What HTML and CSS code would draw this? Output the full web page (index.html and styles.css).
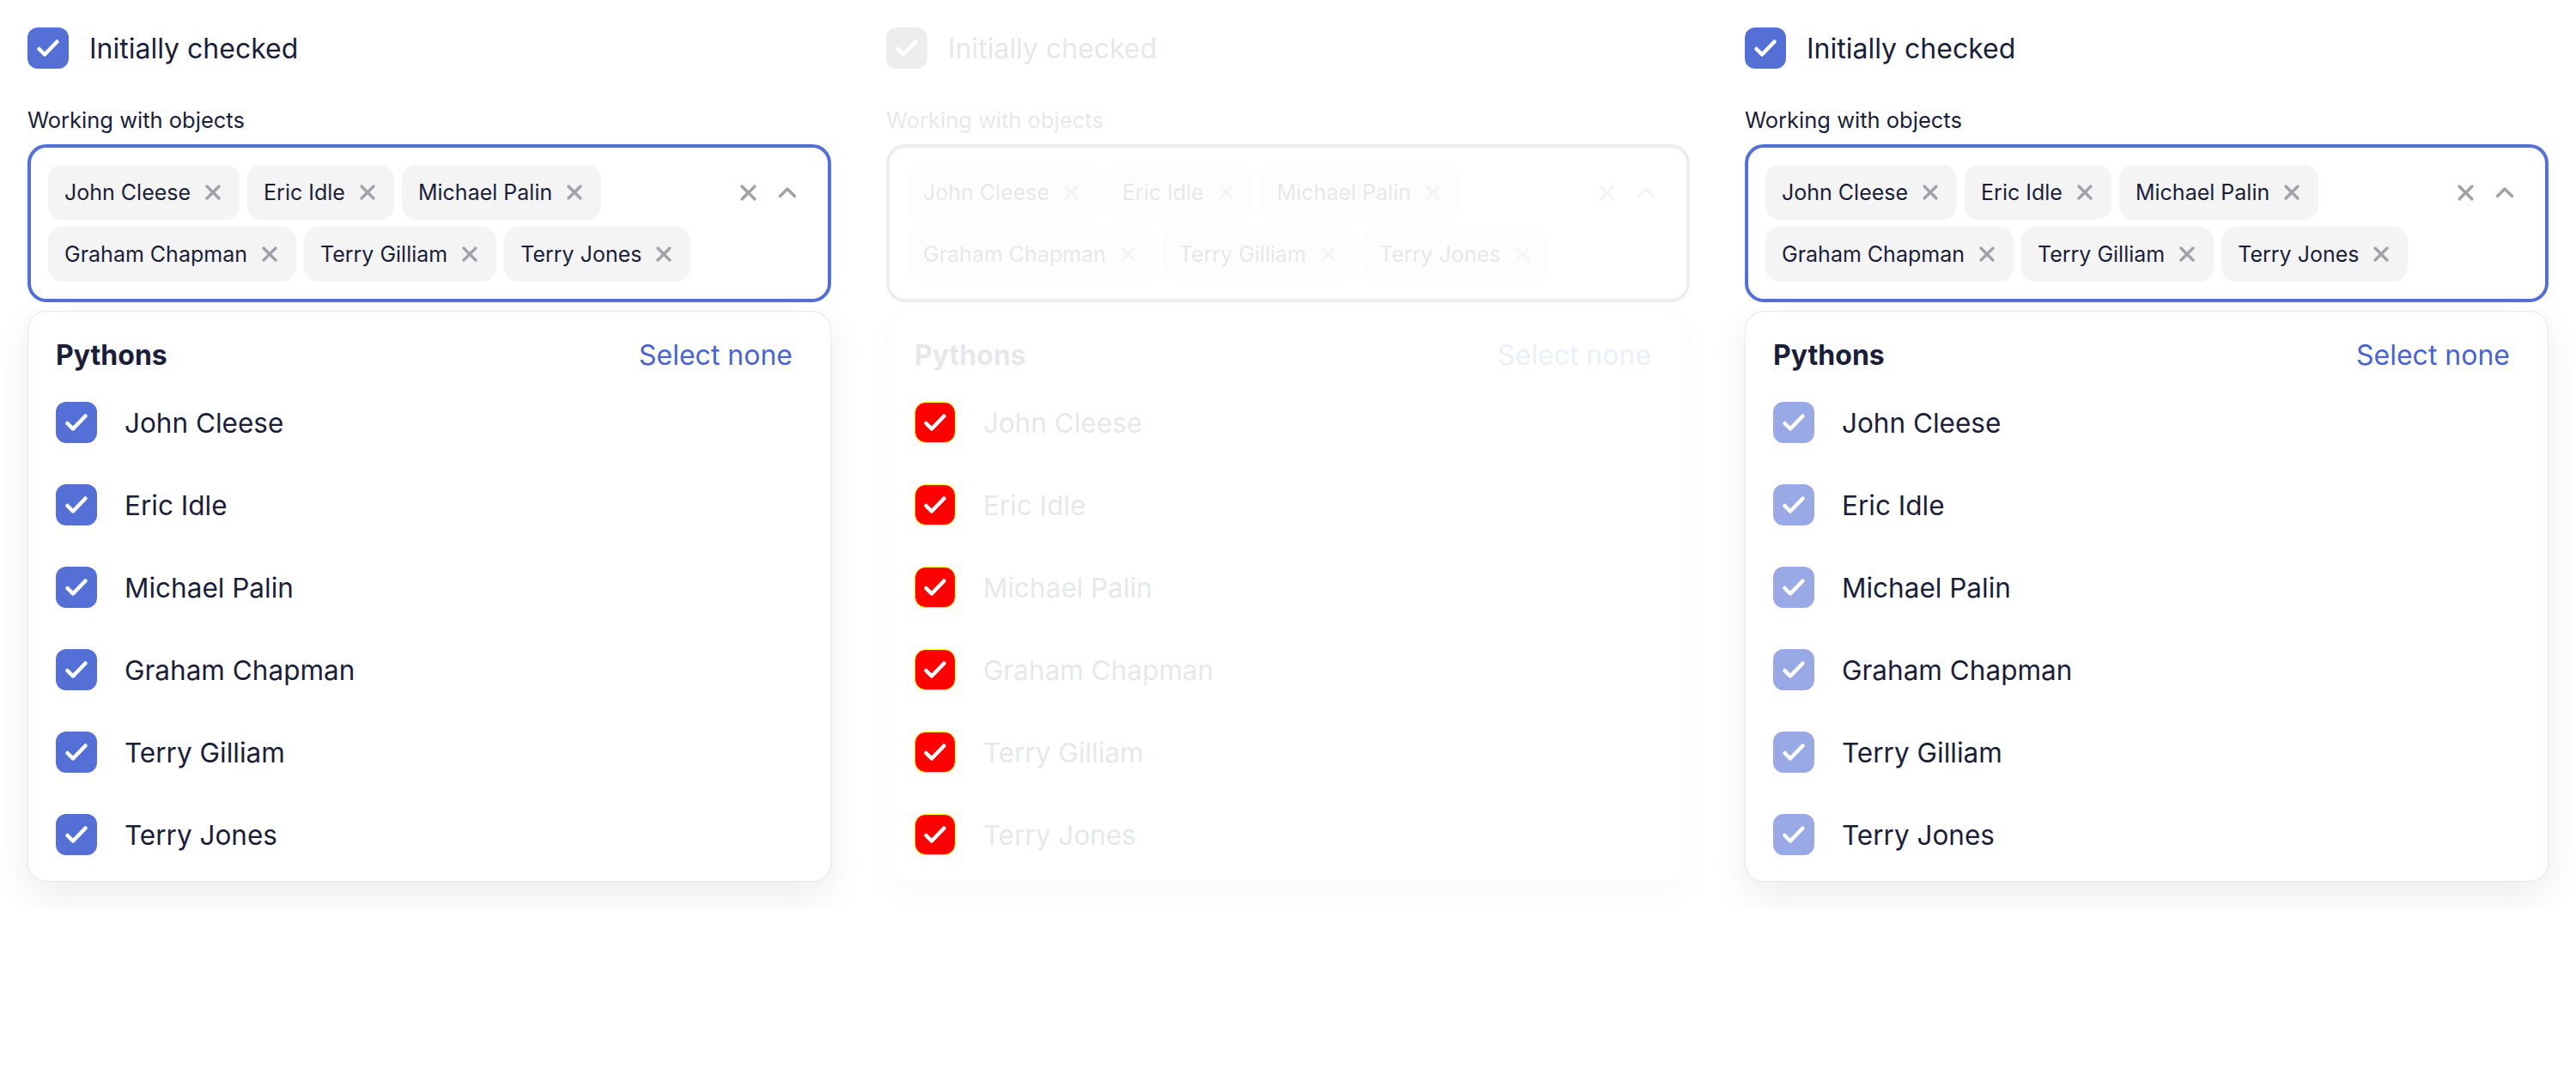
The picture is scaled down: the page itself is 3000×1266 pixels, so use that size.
FILE: index.html
```html
<!DOCTYPE html>
<html lang="en">
<head>
<meta charset="utf-8">
<title>Multiselect</title>
<link rel="stylesheet" href="styles.css">
</head>
<body>
<svg width="0" height="0" class="defs" aria-hidden="true">
  <defs>
    <symbol id="check" viewBox="0 0 48 48"><path d="M13.5 25l6.5 6.5 14.5-15" fill="none" stroke="currentColor" stroke-width="4.5" stroke-linecap="round" stroke-linejoin="round"/></symbol>
    <symbol id="x" viewBox="0 0 20 20"><path d="M3 3l14 14M17 3L3 17" fill="none" stroke="currentColor" stroke-width="3.4" stroke-linecap="round"/></symbol>
    <symbol id="chev" viewBox="0 0 22 14"><path d="M2.5 11.5L11 3l8.5 8.5" fill="none" stroke="currentColor" stroke-width="3.4" stroke-linecap="round" stroke-linejoin="round"/></symbol>
  </defs>
</svg>
<main class="grid">
  <!-- Column 1 -->
  <section class="col">
    <label class="toggle"><span class="box"><svg><use href="#check"/></svg></span><span>Initially checked</span></label>
    <div class="field-label">Working with objects</div>
    <div class="select">
      <div class="tags">
        <span class="tag">John Cleese<svg class="tx"><use href="#x"/></svg></span>
        <span class="tag">Eric Idle<svg class="tx"><use href="#x"/></svg></span>
        <span class="tag">Michael Palin<svg class="tx"><use href="#x"/></svg></span>
        <span class="tag">Graham Chapman<svg class="tx"><use href="#x"/></svg></span>
        <span class="tag">Terry Gilliam<svg class="tx"><use href="#x"/></svg></span>
        <span class="tag">Terry Jones<svg class="tx"><use href="#x"/></svg></span>
      </div>
      <div class="ctrls"><svg class="cx"><use href="#x"/></svg><svg class="cv"><use href="#chev"/></svg></div>
    </div>
    <div class="panel">
      <div class="phead"><span class="ptitle">Pythons</span><span class="pnone">Select none</span></div>
      <div class="item"><span class="box"><svg><use href="#check"/></svg></span><span class="itext">John Cleese</span></div>
      <div class="item"><span class="box"><svg><use href="#check"/></svg></span><span class="itext">Eric Idle</span></div>
      <div class="item"><span class="box"><svg><use href="#check"/></svg></span><span class="itext">Michael Palin</span></div>
      <div class="item"><span class="box"><svg><use href="#check"/></svg></span><span class="itext">Graham Chapman</span></div>
      <div class="item"><span class="box"><svg><use href="#check"/></svg></span><span class="itext">Terry Gilliam</span></div>
      <div class="item"><span class="box"><svg><use href="#check"/></svg></span><span class="itext">Terry Jones</span></div>
    </div>
  </section>

  <!-- Column 2 (disabled) -->
  <section class="col disabled">
    <label class="toggle"><span class="box"><svg><use href="#check"/></svg></span><span class="fade">Initially checked</span></label>
    <div class="field-label fade">Working with objects</div>
    <div class="select">
      <div class="tags fade">
        <span class="tag">John Cleese<svg class="tx"><use href="#x"/></svg></span>
        <span class="tag">Eric Idle<svg class="tx"><use href="#x"/></svg></span>
        <span class="tag">Michael Palin<svg class="tx"><use href="#x"/></svg></span>
        <span class="tag">Graham Chapman<svg class="tx"><use href="#x"/></svg></span>
        <span class="tag">Terry Gilliam<svg class="tx"><use href="#x"/></svg></span>
        <span class="tag">Terry Jones<svg class="tx"><use href="#x"/></svg></span>
      </div>
      <div class="ctrls fade"><svg class="cx"><use href="#x"/></svg><svg class="cv"><use href="#chev"/></svg></div>
    </div>
    <div class="panel">
      <div class="phead fade"><span class="ptitle">Pythons</span><span class="pnone">Select none</span></div>
      <div class="item"><span class="box red"><svg><use href="#check"/></svg></span><span class="itext fade">John Cleese</span></div>
      <div class="item"><span class="box red"><svg><use href="#check"/></svg></span><span class="itext fade">Eric Idle</span></div>
      <div class="item"><span class="box red"><svg><use href="#check"/></svg></span><span class="itext fade">Michael Palin</span></div>
      <div class="item"><span class="box red"><svg><use href="#check"/></svg></span><span class="itext fade">Graham Chapman</span></div>
      <div class="item"><span class="box red"><svg><use href="#check"/></svg></span><span class="itext fade">Terry Gilliam</span></div>
      <div class="item"><span class="box red"><svg><use href="#check"/></svg></span><span class="itext fade">Terry Jones</span></div>
    </div>
  </section>

  <!-- Column 3 -->
  <section class="col">
    <label class="toggle"><span class="box"><svg><use href="#check"/></svg></span><span>Initially checked</span></label>
    <div class="field-label">Working with objects</div>
    <div class="select">
      <div class="tags">
        <span class="tag">John Cleese<svg class="tx"><use href="#x"/></svg></span>
        <span class="tag">Eric Idle<svg class="tx"><use href="#x"/></svg></span>
        <span class="tag">Michael Palin<svg class="tx"><use href="#x"/></svg></span>
        <span class="tag">Graham Chapman<svg class="tx"><use href="#x"/></svg></span>
        <span class="tag">Terry Gilliam<svg class="tx"><use href="#x"/></svg></span>
        <span class="tag">Terry Jones<svg class="tx"><use href="#x"/></svg></span>
      </div>
      <div class="ctrls"><svg class="cx"><use href="#x"/></svg><svg class="cv"><use href="#chev"/></svg></div>
    </div>
    <div class="panel">
      <div class="phead"><span class="ptitle">Pythons</span><span class="pnone">Select none</span></div>
      <div class="item"><span class="box soft"><svg><use href="#check"/></svg></span><span class="itext">John Cleese</span></div>
      <div class="item"><span class="box soft"><svg><use href="#check"/></svg></span><span class="itext">Eric Idle</span></div>
      <div class="item"><span class="box soft"><svg><use href="#check"/></svg></span><span class="itext">Michael Palin</span></div>
      <div class="item"><span class="box soft"><svg><use href="#check"/></svg></span><span class="itext">Graham Chapman</span></div>
      <div class="item"><span class="box soft"><svg><use href="#check"/></svg></span><span class="itext">Terry Gilliam</span></div>
      <div class="item"><span class="box soft"><svg><use href="#check"/></svg></span><span class="itext">Terry Jones</span></div>
    </div>
  </section>
</main>
</body>
</html>
```

FILE: styles.css
```css
html, body {
  margin: 0;
  padding: 0;
  background: #ffffff;
}
body {
  font-family: Inter, "Noto Sans", "Liberation Sans", sans-serif;
  color: #1b1e3a;
}
.defs {
  position: absolute;
  width: 0;
  height: 0;
}
.grid {
  display: grid;
  grid-template-columns: repeat(3, 936px);
  column-gap: 64px;
  padding: 32px;
}
.col {
  display: flex;
  flex-direction: column;
}
.toggle {
  display: flex;
  align-items: center;
  gap: 24px;
  height: 48px;
  font-size: 32px;
}
.box {
  width: 48px;
  height: 48px;
  flex: none;
  border-radius: 12px;
  background: #5470d6;
  color: #ffffff;
  display: flex;
  box-sizing: border-box;
}
.box svg {
  width: 48px;
  height: 48px;
}
.box.soft {
  background: #98a9e6;
}
.box.red {
  background: #ff0000;
  border: 1px solid #ffff00;
  border-radius: 13px;
}
.box.red svg {
  margin: -1px;
}
.disabled .toggle .box {
  background: #ededed;
}
.fade {
  opacity: 0.1;
}
.field-label {
  font-size: 25.5px;
  line-height: 32px;
  margin-top: 44px;
  margin-bottom: 12px;
}
.select {
  border: 4px solid #5470d6;
  border-radius: 22px;
  padding: 20px 36px 20px 20px;
  display: flex;
  align-items: flex-start;
  gap: 24px;
  background: #fff;
}
.disabled .select {
  border-color: #eeeeee;
}
.tags {
  flex: 1;
  display: flex;
  flex-wrap: wrap;
  gap: 8px 9px;
}
.tag {
  height: 64px;
  display: inline-flex;
  align-items: center;
  gap: 16px;
  padding: 0 21px 0 19px;
  border-radius: 16px;
  background: #f4f4f5;
  font-size: 25px;
  color: #1b1e3a;
}
.tx {
  width: 20px;
  height: 20px;
  color: #a1a1aa;
}
.ctrls {
  display: flex;
  align-items: center;
  gap: 24px;
  height: 64px;
}
.cx {
  width: 21px;
  height: 21px;
  color: #a1a1aa;
}
.cv {
  width: 22px;
  height: 14px;
  color: #a1a1aa;
}
.panel {
  margin-top: 10px;
  border: 1px solid #e6e6e9;
  border-radius: 22px;
  padding: 18px 32px 5px 32px;
  box-shadow: 0 16px 40px rgba(20, 20, 40, 0.08);
  background: #fff;
}
.disabled .panel {
  border-color: #fafafa;
  box-shadow: 0 16px 40px rgba(20, 20, 40, 0.025);
}
.phead {
  display: flex;
  justify-content: space-between;
  align-items: center;
  height: 64px;
}
.ptitle {
  font-size: 32px;
  font-weight: 700;
}
.pnone {
  font-size: 32px;
  color: #4a64cf;
  margin-right: 12px;
}
.item {
  display: flex;
  align-items: center;
  gap: 32px;
  height: 96px;
  margin-top: -1px;
  margin-bottom: 1px;
}
.itext {
  font-size: 31.5px;
}
```
